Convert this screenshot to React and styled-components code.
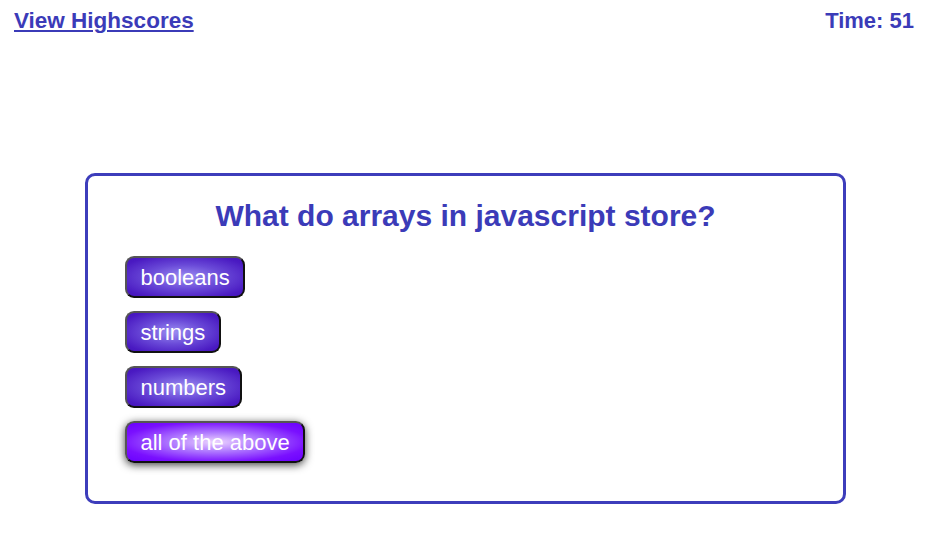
import { useState } from 'react';
import styled, { createGlobalStyle } from 'styled-components';

const GlobalStyle = createGlobalStyle`
  body {
    margin: 0;
    background: #ffffff;
    font-family: "Liberation Sans", Arial, sans-serif;
  }
`;

const Header = styled.header`
  display: flex;
  justify-content: space-between;
  align-items: center;
  padding: 8px 20px 0 14px;
  font-size: 22px;
  font-weight: bold;
  color: #3b3bb8;
`;

const HighscoreLink = styled.a`
  color: #3b3bb8;
  font-size: 22.5px;
  text-decoration: underline;
  cursor: pointer;
`;

const Timer = styled.span`
  color: #3b3bb8;
`;

const Card = styled.section`
  margin: 139px 88px 0 85px;
  padding: 23px 37px 38px;
  border: 3px solid #3d3dbb;
  border-radius: 10px;
`;

const Question = styled.h2`
  margin: 0 0 23px;
  text-align: center;
  font-size: 30px;
  font-weight: bold;
  color: #3b3bb8;
`;

const Choices = styled.div`
  display: flex;
  flex-direction: column;
  align-items: flex-start;
  gap: 13px;
`;

const Choice = styled.button`
  font-family: "Liberation Sans", Arial, sans-serif;
  font-size: 22px;
  line-height: 25px;
  color: #ffffff;
  padding: 6.5px 13.5px;
  border: 2px solid;
  border-color: #555555 #111111 #111111 #555555;
  border-radius: 9px;
  cursor: pointer;
  background: ${(p) =>
    p.$active
      ? 'radial-gradient(ellipse at center, #ecd4ff 0%, #b07aff 35%, #7a10ff 75%, #6a00ff 100%)'
      : 'radial-gradient(ellipse at center, #9c8ef2 0%, #6a4ad8 45%, #4a1ac2 85%, #4414bc 100%)'};
  box-shadow: ${(p) => (p.$active ? '0 2px 8px rgba(0, 0, 0, 0.75)' : 'none')};
`;

const answers = ['booleans', 'strings', 'numbers', 'all of the above'];

export default function App() {
  const [hovered, setHovered] = useState(3);

  return (
    <>
      <GlobalStyle />
      <Header>
        <HighscoreLink>View Highscores</HighscoreLink>
        <Timer>Time: 51</Timer>
      </Header>
      <Card>
        <Question>What do arrays in javascript store?</Question>
        <Choices>
          {answers.map((answer, i) => (
            <Choice
              key={answer}
              $active={hovered === i}
              onMouseEnter={() => setHovered(i)}
            >
              {answer}
            </Choice>
          ))}
        </Choices>
      </Card>
    </>
  );
}
